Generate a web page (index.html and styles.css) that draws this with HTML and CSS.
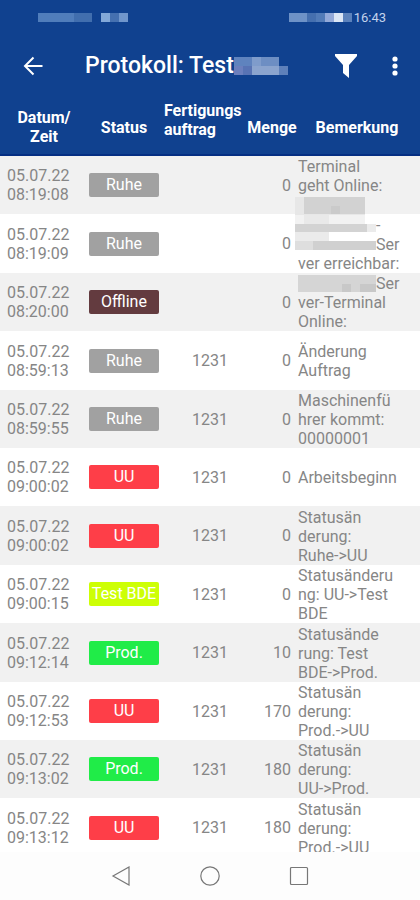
FILE: index.html
```html
<!DOCTYPE html>
<html lang="de">
<head>
<meta charset="utf-8">
<meta name="viewport" content="width=device-width, initial-scale=1">
<title>Protokoll: Test</title>
<link rel="stylesheet" href="styles.css">
</head>
<body>
<div class="statusbar">
  <svg class="carrier" width="90" height="9" viewBox="0 0 90 9" aria-hidden="true"><path fill="#507dbb" d="M0 0h36v9H0z"/><path fill="#416eae" d="M36 0h18v9H36z"/><path fill="#82a8d8" d="M63 0h9v9h-9z"/><path fill="#4570b0" d="M72 0h9v9h-9z"/><path fill="#7096cc" d="M81 0h9v9h-9z"/></svg>
  <svg class="signals" width="63" height="9" viewBox="0 0 63 9" aria-hidden="true"><path fill="#6e92c7" d="M0 0h18v9H0z"/><path fill="#456faf" d="M18 0h9v9h-9z"/><path fill="#527bb8" d="M27 0h9v9h-9z"/><path fill="#93a9d9" d="M36 0h9v9h-9z"/><path fill="#dce6f5" d="M45 0h9v9h-9z"/><path fill="#5c82bc" d="M54 0h9v9h-9z"/></svg>
  <span class="clock">16:43</span>
</div>
<header class="appbar">
  <button class="icon-button" aria-label="Zurück"><svg width="20" height="20" viewBox="0 0 20 20"><path d="M19.500 10H2M10.500 1.500 2 10l8.500 8.500" fill="none" stroke="#fff" stroke-width="2"/></svg></button>
  <h1>Protokoll: Test<svg width="54" height="18" viewBox="0 0 54 18" aria-hidden="true"><path fill="#5f83be" d="M0 0h9v9H0zM9 0h9v9H9z"/><path fill="#7f9ccb" d="M18 0h9v9h-9z"/><path fill="#6d8ec3" d="M27 0h18v9H27z"/><path fill="#6b7fbd" d="M0 9h9v9H0z"/><path fill="#5873b4" d="M9 9h9v9H9z"/><path fill="#8ba4ce" d="M18 9h27v9H18z"/><path fill="#5e80ba" d="M45 9h9v9h-9z"/></svg></h1>
  <button class="icon-button filter" aria-label="Filter"><svg width="24" height="26" viewBox="0 0 24 26"><path fill="#fff" d="M1 1h22v2l-8 9v13l-6-5v-8L1 3z"/></svg></button>
  <button class="icon-button" aria-label="Weitere Optionen"><svg width="6" height="20" viewBox="0 0 6 20"><g fill="#fff"><circle cx="3" cy="3" r="2.600"/><circle cx="3" cy="10" r="2.600"/><circle cx="3" cy="17" r="2.600"/></g></svg></button>
</header>
<main class="log">
<table>
<colgroup><col class="c-time"><col class="c-status"><col class="c-order"><col class="c-count"><col></colgroup>
<thead><tr><th scope="col">Datum/<br>Zeit</th><th scope="col">Status</th><th scope="col" class="order-head">Fertigungs<br>auftrag</th><th scope="col">Menge</th><th scope="col" class="note-head">Bemerkung</th></tr></thead>
<tbody>
<tr><td>05.07.22<br>08:19:08</td><td><span class="badge idle">Ruhe</span></td><td></td><td>0</td><td>Terminal<br>geht Online:<br><br></td></tr>
<tr><td>05.07.22<br>08:19:09</td><td><span class="badge idle">Ruhe</span></td><td></td><td>0</td><td><svg class="masked tall" width="81" height="54" viewBox="0 0 81 54" aria-hidden="true"><path fill="#e7e7e7" d="M0 0h70v18H0z"/><path fill="#f2f2f2" d="M0 18h70v9H0z"/><path fill="#d2d2d2" d="M9 0h61v17H9z"/><path fill="#cacaca" d="M36 9h9v8h-9z"/><path fill="#e9e9e9" d="M9 18h25v9H9z"/><path fill="#d3d3d3" d="M0 27h72v8H0z"/><path fill="#ebebeb" d="M72 27h9v8h-9zM0 35h34v9H0z"/><path fill="#d0d0d0" d="M0 44h81v9H0z"/><path fill="#dedede" d="M0 44h18v9H0z"/></svg><span class="after-mask">-</span><br><span class="after-mask">Ser</span><br>ver erreichbar:</td></tr>
<tr><td>05.07.22<br>08:20:00</td><td><span class="badge offline">Offline</span></td><td></td><td>0</td><td><svg class="masked" width="78" height="17" viewBox="0 0 78 17" aria-hidden="true"><path fill="#d5d5d5" d="M0 0h78v17H0z"/><path fill="#c8c8c8" d="M44 9h9v8h-9zM62 9h16v8H62z"/></svg><span class="after-mask">Ser</span><br>ver-Terminal<br>Online:</td></tr>
<tr><td>05.07.22<br>08:59:13</td><td><span class="badge idle">Ruhe</span></td><td>1231</td><td>0</td><td>Änderung<br>Auftrag</td></tr>
<tr><td>05.07.22<br>08:59:55</td><td><span class="badge idle">Ruhe</span></td><td>1231</td><td>0</td><td>Maschinenfü<br>hrer kommt:<br>00000001</td></tr>
<tr><td>05.07.22<br>09:00:02</td><td><span class="badge uu">UU</span></td><td>1231</td><td>0</td><td>Arbeitsbeginn</td></tr>
<tr><td>05.07.22<br>09:00:02</td><td><span class="badge uu">UU</span></td><td>1231</td><td>0</td><td>Statusän<br>derung:<br>Ruhe-&gt;UU</td></tr>
<tr><td>05.07.22<br>09:00:15</td><td><span class="badge test">Test BDE</span></td><td>1231</td><td>0</td><td>Statusänderu<br>ng: UU-&gt;Test<br>BDE</td></tr>
<tr><td>05.07.22<br>09:12:14</td><td><span class="badge prod">Prod.</span></td><td>1231</td><td>10</td><td>Statusände<br>rung: Test<br>BDE-&gt;Prod.</td></tr>
<tr><td>05.07.22<br>09:12:53</td><td><span class="badge uu">UU</span></td><td>1231</td><td>170</td><td>Statusän<br>derung:<br>Prod.-&gt;UU</td></tr>
<tr><td>05.07.22<br>09:13:02</td><td><span class="badge prod">Prod.</span></td><td>1231</td><td>180</td><td>Statusän<br>derung:<br>UU-&gt;Prod.</td></tr>
<tr><td>05.07.22<br>09:13:12</td><td><span class="badge uu">UU</span></td><td>1231</td><td>180</td><td>Statusän<br>derung:<br>Prod.-&gt;UU</td></tr>
</tbody>
</table>
</main>
<nav class="navbar" aria-label="System">
  <button aria-label="Zurück"><svg width="20" height="20" viewBox="0 0 20 20"><path d="M18 1v18L2 10z"/></svg></button>
  <button aria-label="Startseite"><svg width="20" height="20" viewBox="0 0 20 20"><circle cx="10" cy="10" r="9.200"/></svg></button>
  <button aria-label="Übersicht"><svg width="20" height="20" viewBox="0 0 20 20"><rect x="1.500" y="1.500" width="17" height="17" rx="1"/></svg></button>
</nav>
</body>
</html>
```
FILE: styles.css
```css
* { box-sizing: border-box; }

body {
  margin: 0;
  height: 100vh;
  display: flex;
  flex-direction: column;
  overflow: hidden;
  background: #fdfdfd;
  font: 16px/19px Roboto, sans-serif;
  color: #868686;
}

button {
  border: 0;
  padding: 0;
  background: none;
  display: flex;
  align-items: center;
  justify-content: center;
}

svg { display: block; }

.statusbar {
  flex: none;
  height: 34px;
  padding: 0 34px 0 38px;
  display: flex;
  align-items: center;
  background: #10418f;
}

.signals { margin-left: auto; }

.clock {
  margin-left: 2px;
  font-size: 13px;
  color: #c3d3ec;
}

.appbar {
  flex: none;
  height: 64px;
  padding: 0 10px 0 18px;
  display: flex;
  align-items: center;
  background: #10418f;
}

.icon-button { width: 30px; height: 40px; }
.filter { margin-right: 19px; }

h1 {
  flex: 1;
  margin: 0 0 0 37px;
  display: flex;
  align-items: center;
  font-size: 23px;
  line-height: 28px;
  font-weight: 500;
  color: #fff;
}

.log {
  flex: 1;
  min-height: 0;
  overflow: hidden;
}

table {
  width: 100%;
  table-layout: fixed;
  border-collapse: separate;
  border-spacing: 0;
}

.c-time { width: 88px; }
.c-status { width: 72px; }
.c-order { width: 86px; }
.c-count { width: 52px; }

th {
  height: 58px;
  padding: 2px 0 0;
  background: #10418f;
  border-bottom: 2px solid #052f83;
  color: #fff;
  font-weight: 700;
}

.order-head {
  padding: 3px 0 0 4px;
  text-align: left;
  vertical-align: top;
}

.note-head { padding-right: 4px; }

td {
  height: 58px;
  padding: 0;
  background: #fff;
  vertical-align: middle;
}

tbody tr:nth-child(5n + 2) td,
tbody tr:nth-child(5n + 4) td { height: 59px; }
tbody tr:nth-child(odd) td { background: #f1f1f1; }

td:nth-child(1) { padding-left: 7px; }
td:nth-child(3) { padding-left: 14px; text-align: center; }
td:nth-child(4) { padding-right: 7px; text-align: right; }
td:nth-child(5) { position: relative; padding-top: 1px; }

.badge {
  display: block;
  width: 70px;
  margin: 0 auto;
  border-radius: 2px;
  line-height: 24px;
  text-align: center;
  white-space: nowrap;
  color: #fff;
}

.idle { background: #a1a1a1; }
.offline { background: #633b3f; }
.uu { background: #fe3e48; }
.test { background: #cdff05; }
.prod { background: #20ec48; }

.masked {
  position: absolute;
  top: 2px;
  left: 0;
}

.masked.tall {
  top: -17px;
  left: -3px;
}

.after-mask { padding-left: 78px; }

.navbar {
  flex: none;
  height: 48px;
  padding: 0 76px;
  display: flex;
  align-items: center;
  justify-content: space-around;
}

.navbar svg {
  fill: none;
  stroke: #777;
  stroke-width: 1.2;
}
```
